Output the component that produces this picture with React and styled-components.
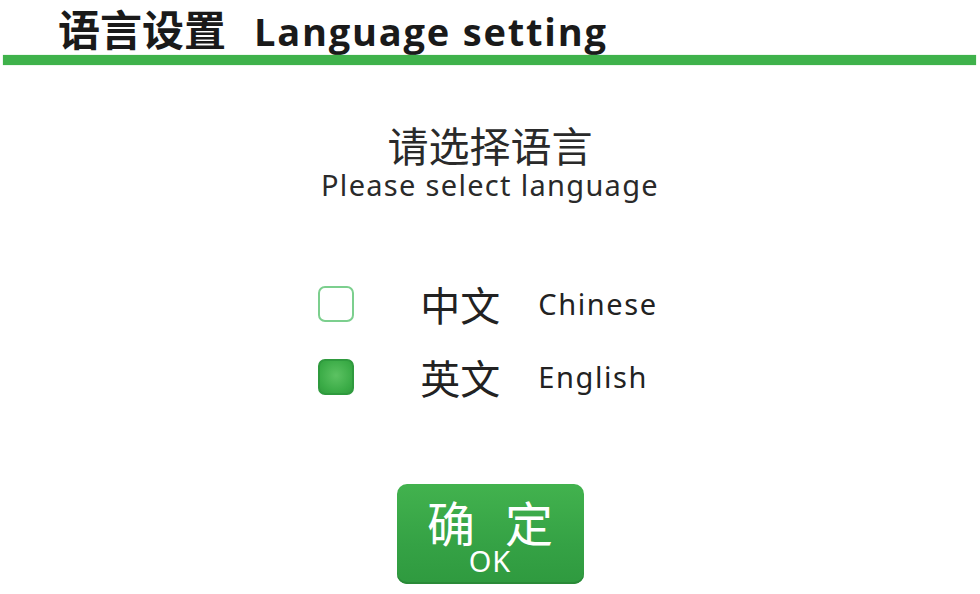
import React, { useState } from "react";
import styled, { createGlobalStyle } from "styled-components";

const GlobalStyle = createGlobalStyle`
  html, body {
    margin: 0;
    padding: 0;
    background: #ffffff;
  }
  body {
    font-family: "Noto Sans", "Noto Sans CJK SC", sans-serif;
    color: #222;
  }
`;

const languages = [
  { key: "zh", cn: "中文", en: "Chinese" },
  { key: "en", cn: "英文", en: "English" },
];

const App = () => {
  const [selected, setSelected] = useState("en");

  return (
    <Page>
      <GlobalStyle />
      <Header>
        <TitleCn>语言设置</TitleCn>
        <TitleEn>Language setting</TitleEn>
      </Header>
      <GreenRule />
      <Body>
        <Prompt>
          <PromptCn>请选择语言</PromptCn>
          <PromptEn>Please select language</PromptEn>
        </Prompt>
        <Options>
          {languages.map((lang) => (
            <Option key={lang.key} onClick={() => setSelected(lang.key)}>
              <Box checked={selected === lang.key} />
              <OptionCn>{lang.cn}</OptionCn>
              <OptionEn>{lang.en}</OptionEn>
            </Option>
          ))}
        </Options>
        <OkButton>
          <OkCn>
            <span>确</span>
            <span>定</span>
          </OkCn>
          <OkEn>OK</OkEn>
        </OkButton>
      </Body>
    </Page>
  );
};

export default App;

const Page = styled.div`
  width: 980px;
  height: 594px;
  overflow: hidden;
  display: flex;
  flex-direction: column;
`;

const Header = styled.div`
  display: flex;
  align-items: baseline;
  gap: 28px;
  padding: 3px 0 0 58px;
  height: 55px;
  box-sizing: border-box;
`;

const TitleCn = styled.span`
  font-family: "Noto Sans CJK SC", sans-serif;
  font-weight: 700;
  font-size: 42px;
  line-height: 50px;
  color: #1a1a1a;
`;

const TitleEn = styled.span`
  font-family: "Open Sans", "Noto Sans", sans-serif;
  font-weight: 700;
  font-size: 38px;
  line-height: 50px;
  color: #1a1a1a;
  letter-spacing: 1.8px;
`;

const GreenRule = styled.div`
  height: 10px;
  margin: 0 4px 0 3px;
  background: #3fb24b;
  box-shadow: 0 0 1px #8fd597;
`;

const Body = styled.div`
  display: flex;
  flex-direction: column;
  align-items: center;
`;

const Prompt = styled.div`
  margin-top: 56px;
  display: flex;
  flex-direction: column;
  align-items: center;
`;

const PromptCn = styled.div`
  font-family: "Noto Sans CJK SC", sans-serif;
  font-size: 41px;
  line-height: 46px;
  color: #2a2a2a;
`;

const PromptEn = styled.div`
  font-family: "Noto Sans", sans-serif;
  font-size: 29px;
  line-height: 36px;
  letter-spacing: 1.3px;
  color: #2a2a2a;
`;

const Options = styled.div`
  margin-top: 78px;
  margin-left: -4px;
  display: flex;
  flex-direction: column;
  gap: 27px;
`;

const Option = styled.div`
  display: flex;
  align-items: center;
  height: 46px;
  cursor: pointer;
`;

const Box = styled.div`
  width: 36px;
  height: 36px;
  box-sizing: border-box;
  border-radius: 7px;
  border: 2px solid ${({ checked }) => (checked ? "#2f9a3e" : "#7ccf8e")};
  background: ${({ checked }) =>
    checked ? "radial-gradient(circle at 50% 45%, #5cc262, #3aab46 70%, #329c3e)" : "#ffffff"};
`;

const OptionCn = styled.span`
  font-family: "Noto Sans CJK SC", sans-serif;
  font-size: 40px;
  line-height: 46px;
  color: #222;
  margin-left: 66px;
`;

const OptionEn = styled.span`
  font-family: "Noto Sans", sans-serif;
  font-size: 29px;
  line-height: 46px;
  color: #222;
  margin-left: 38px;
  letter-spacing: 1.6px;
`;

const OkButton = styled.button`
  margin-top: 84px;
  width: 187px;
  height: 100px;
  border: none;
  border-radius: 10px;
  background: linear-gradient(#42b24e, #35a245 60%, #2f9a3f);
  box-shadow: inset 0 -2px 0 #2a8a38;
  display: flex;
  flex-direction: column;
  align-items: center;
  justify-content: center;
  color: #ffffff;
  cursor: pointer;
  padding: 4px 0 0;
`;

const OkCn = styled.span`
  display: flex;
  gap: 30px;
  font-family: "Noto Sans CJK SC", sans-serif;
  font-size: 48px;
  line-height: 50px;
`;

const OkEn = styled.span`
  font-family: "Noto Sans", sans-serif;
  font-size: 29px;
  line-height: 30px;
  letter-spacing: 1px;
`;
